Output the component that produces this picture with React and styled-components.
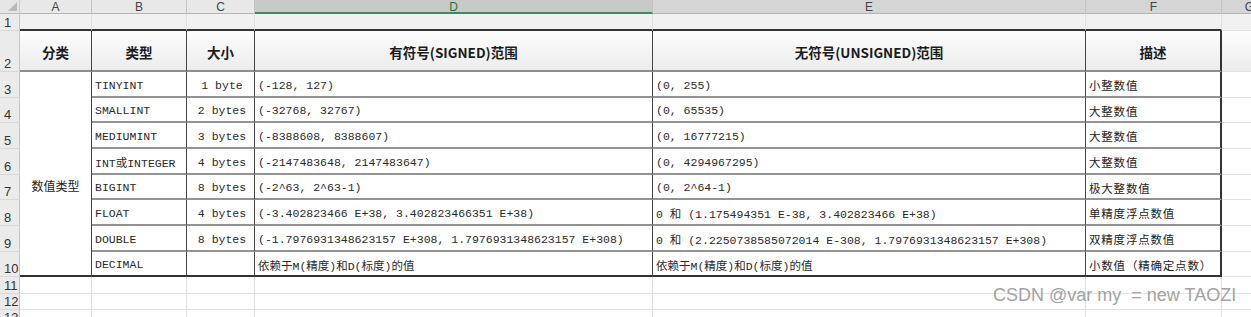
import React from 'react'
import styled, { createGlobalStyle } from 'styled-components'

const GlobalStyle = createGlobalStyle`
    html, body {
        margin: 0;
        padding: 0;
        background: #ffffff;
    }
    body {
        font-family: "Liberation Sans", "Noto Sans CJK SC", sans-serif;
    }
`

const COLS = ['A', 'B', 'C', 'D', 'E', 'F', 'G']
const ROW_HEIGHTS = [14, 17, 41, 26, 25, 26, 26, 25, 26, 26, 25, 17, 16, 16]

const Sheet = styled.div`
    position: relative;
    width: 1251px;
    height: 317px;
    overflow: hidden;
    display: grid;
    grid-template-columns: 20px 72px 95px 68px 398px 433px 136px 56px;
    grid-template-rows: ${ROW_HEIGHTS.map(h => h + 'px').join(' ')};
    background: #ffffff;
`

const Corner = styled.div`
    position: relative;
    box-sizing: border-box;
    background: #e6e6e6;
    border-right: 1px solid #c9c9c9;
    border-bottom: 1px solid #bdbdbd;

    &::after {
        content: '';
        position: absolute;
        right: 2px;
        bottom: 2px;
        width: 0;
        height: 0;
        border-left: 9px solid transparent;
        border-bottom: 9px solid #b9b9b9;
    }
`

const ColHeader = styled.div`
    box-sizing: border-box;
    display: flex;
    align-items: center;
    justify-content: center;
    font-size: 12px;
    line-height: 1;
    color: ${props => props.$selected ? '#217346' : '#444444'};
    background: ${props => props.$tone};
    border-right: 1px solid #c3c3c3;
    border-bottom: ${props => props.$selected ? '2px solid #3f8a63' : '1px solid #b4b4b4'};
    padding-top: 1px;
`

const RowNum = styled.div`
    box-sizing: border-box;
    display: flex;
    align-items: flex-end;
    padding: 0 0 1px 4px;
    font-size: 13px;
    line-height: 1;
    color: #333333;
    background: #ebebeb;
    border-right: 1px solid #c6c6c6;
    border-bottom: 1px solid #d8d8d8;
`

const Blank = styled.div`
    box-sizing: border-box;
    background: ${props => props.$bg || '#ffffff'};
    border-right: 1px solid #e0e0e0;
    border-bottom: ${props => props.$bottom || '1px solid #e2e2e2'};
`

const HeadCell = styled.div`
    box-sizing: border-box;
    display: flex;
    align-items: center;
    justify-content: center;
    padding-top: 2px;
    background: linear-gradient(#fdfdfd, #ececec);
    border-right: ${props => props.$last ? '2px solid #333333' : '1px solid #444444'};
    border-bottom: 2px solid #8e8e8e;
    font-family: "Noto Sans CJK SC", "Liberation Sans", sans-serif;
    font-weight: 700;
    font-size: 13.5px;
    color: #1c1c1c;
`

const Cell = styled.div`
    box-sizing: border-box;
    display: flex;
    align-items: center;
    justify-content: ${props => props.$center ? 'center' : 'flex-start'};
    padding: 2px 0 0 3px;
    white-space: nowrap;
    overflow: hidden;
    border-right: ${props => props.$last ? '2px solid #333333' : '1px solid #444444'};
    border-bottom: ${props => props.$end ? '2px solid #333333' : '2px solid #939393'};
    font-family: "Liberation Mono", "Noto Sans CJK SC", monospace;
    font-size: 11.5px;
    color: #2a2a2a;
`

const DescCell = styled(Cell)`
    font-family: "Noto Sans CJK SC", sans-serif;
    font-size: 11.5px;
    letter-spacing: 0.8px;
    color: #222222;
`

const GroupCell = styled.div`
    grid-column: 2 / 3;
    grid-row: 4 / 12;
    box-sizing: border-box;
    display: flex;
    align-items: center;
    justify-content: center;
    padding-top: 23px;
    border-right: 1px solid #444444;
    border-bottom: 2px solid #333333;
    font-family: "Noto Sans CJK SC", sans-serif;
    font-size: 12px;
    color: #222222;
`

const Watermark = styled.div`
    position: absolute;
    left: 993px;
    top: 285px;
    font-family: "Liberation Sans", sans-serif;
    font-size: 18px;
    color: #a3a3a3;
    white-space: pre;
    pointer-events: none;
`

const HEADERS = ['分类', '类型', '大小', '有符号(SIGNED)范围', '无符号(UNSIGNED)范围', '描述']

const DATA = [
    ['TINYINT', '1 byte', '(-128, 127)', '(0, 255)', '小整数值'],
    ['SMALLINT', '2 bytes', '(-32768, 32767)', '(0, 65535)', '大整数值'],
    ['MEDIUMINT', '3 bytes', '(-8388608, 8388607)', '(0, 16777215)', '大整数值'],
    ['INT或INTEGER', '4 bytes', '(-2147483648, 2147483647)', '(0, 4294967295)', '大整数值'],
    ['BIGINT', '8 bytes', '(-2^63, 2^63-1)', '(0, 2^64-1)', '极大整数值'],
    ['FLOAT', '4 bytes', '(-3.402823466 E+38, 3.402823466351 E+38)', '0 和 (1.175494351 E-38, 3.402823466 E+38)', '单精度浮点数值'],
    ['DOUBLE', '8 bytes', '(-1.7976931348623157 E+308, 1.7976931348623157 E+308)', '0 和 (2.2250738585072014 E-308, 1.7976931348623157 E+308)', '双精度浮点数值'],
    ['DECIMAL', '', '依赖于M(精度)和D(标度)的值', '依赖于M(精度)和D(标度)的值', '小数值（精确定点数）'],
]

const headerTone = i => (i < 3 ? '#e8e8e8' : i === 3 ? '#c9c9c9' : '#d5d5d5')

export default function App() {
    return (
        <>
            <GlobalStyle />
            <Sheet>
                <Corner />
                {COLS.map((c, i) => (
                    <ColHeader key={c} $tone={headerTone(i)} $selected={i === 3}>{c}</ColHeader>
                ))}

                {/* row 1 */}
                <RowNum>1</RowNum>
                {COLS.map((c, i) => (
                    <Blank
                        key={c}
                        $bg="#f1f1f1"
                        $bottom={i < 6 ? '2px solid #333333' : '1px solid #e2e2e2'}
                    />
                ))}

                {/* row 2 */}
                <RowNum>2</RowNum>
                {HEADERS.map((h, i) => (
                    <HeadCell key={h} $last={i === 5}>{h}</HeadCell>
                ))}
                <Blank $bg="linear-gradient(#fdfdfd, #ececec)" />

                {/* rows 3 - 10 */}
                {DATA.map((row, r) => {
                    const end = r === DATA.length - 1
                    return (
                        <React.Fragment key={row[0]}>
                            <RowNum>{r + 3}</RowNum>
                            {r === 0 && <GroupCell>数值类型</GroupCell>}
                            <Cell $end={end}>{row[0]}</Cell>
                            <Cell $end={end} $center>{row[1]}</Cell>
                            <Cell $end={end}>{row[2]}</Cell>
                            <Cell $end={end}>{row[3]}</Cell>
                            <DescCell $end={end} $last>{row[4]}</DescCell>
                            <Blank />
                        </React.Fragment>
                    )
                })}

                {[11, 12, 13].map(n => (
                    <React.Fragment key={n}>
                        <RowNum>{n}</RowNum>
                        {COLS.map(c => <Blank key={c} />)}
                    </React.Fragment>
                ))}

                <Watermark>CSDN @var my  = new TAOZI</Watermark>
            </Sheet>
        </>
    )
}
